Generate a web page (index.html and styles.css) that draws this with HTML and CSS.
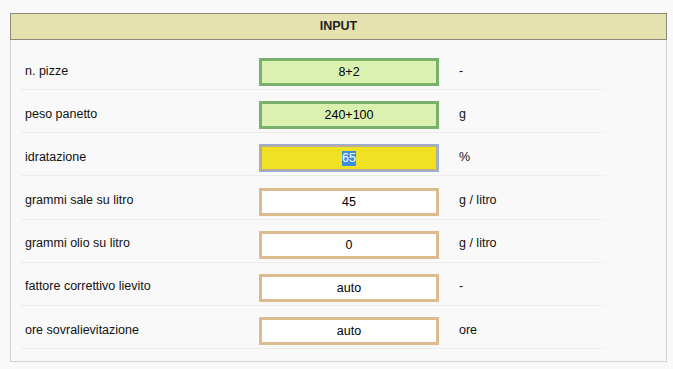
FILE: index.html
```html
<!DOCTYPE html>
<html lang="it">
<head>
  <meta charset="UTF-8">
  <title>Impasto pizza - input</title>
  <link rel="stylesheet" href="styles.css">
</head>
<body>
  <div class="panel">
    <div class="panel-head">INPUT</div>
    <div class="rows">
      <div class="row">
        <div class="label">n. pizze</div>
        <input class="field ok" type="text" value="8+2">
        <div class="unit">-</div>
      </div>
      <div class="row">
        <div class="label">peso panetto</div>
        <input class="field ok" type="text" value="240+100">
        <div class="unit">g</div>
      </div>
      <div class="row">
        <div class="label">idratazione</div>
        <div class="field active"><span class="sel">65</span></div>
        <div class="unit">%</div>
      </div>
      <div class="row">
        <div class="label">grammi sale su litro</div>
        <input class="field" type="text" value="45">
        <div class="unit">g / litro</div>
      </div>
      <div class="row">
        <div class="label">grammi olio su litro</div>
        <input class="field" type="text" value="0">
        <div class="unit">g / litro</div>
      </div>
      <div class="row">
        <div class="label">fattore correttivo lievito</div>
        <input class="field" type="text" value="auto">
        <div class="unit">-</div>
      </div>
      <div class="row">
        <div class="label">ore sovralievitazione</div>
        <input class="field" type="text" value="auto">
        <div class="unit">ore</div>
      </div>
    </div>
  </div>
</body>
</html>
```

FILE: styles.css
```css
body {
  margin: 0;
  background: #f9f9f9;
  font-family: "Liberation Sans", Arial, sans-serif;
  font-size: 12.5px;
  color: #111;
}
.panel {
  box-sizing: border-box;
  width: 657px;
  margin: 13px 0 0 10px;
  border: 1px solid #d2d2d2;
  border-top: none;
  background: #f9f9f9;
}
.panel-head {
  margin: 0 -1px;
  height: 25px;
  line-height: 25px;
  border: 1px solid #8c8a7c;
  background: #e6e2b0;
  text-align: center;
  font-weight: bold;
  color: #222;
}
.rows {
  padding: 7px 0 12px 10px;
}
.row {
  display: flex;
  align-items: center;
  width: 592px;
  padding: 11px 0 4px;
  background: linear-gradient(to right, #ececec 97%, rgba(236, 236, 236, 0)) no-repeat left bottom / 100% 1px;
}
.row + .row {
  padding-top: 11.2px;
}
.label {
  width: 234px;
  padding-left: 4px;
  margin-top: -3px;
}
.field {
  box-sizing: border-box;
  width: 180px;
  height: 28px;
  margin: 0;
  padding: 0;
  border: 3px solid #dcbb8e;
  background: #fff;
  font-family: inherit;
  font-size: 12.5px;
  color: #000;
  text-align: center;
  outline: none;
}
.field.ok {
  border-color: #79b06b;
  background: #daf1b0;
}
.field.active {
  display: flex;
  align-items: center;
  justify-content: center;
  border: 1px solid #97afe0;
  box-shadow: inset 0 0 0 2px #b7ad98;
  background: #f0e222;
}
.sel {
  background: #3a8ee2;
  color: #fff;
  line-height: 15px;
}
.unit {
  padding-left: 20px;
  margin-top: -3px;
}
```
